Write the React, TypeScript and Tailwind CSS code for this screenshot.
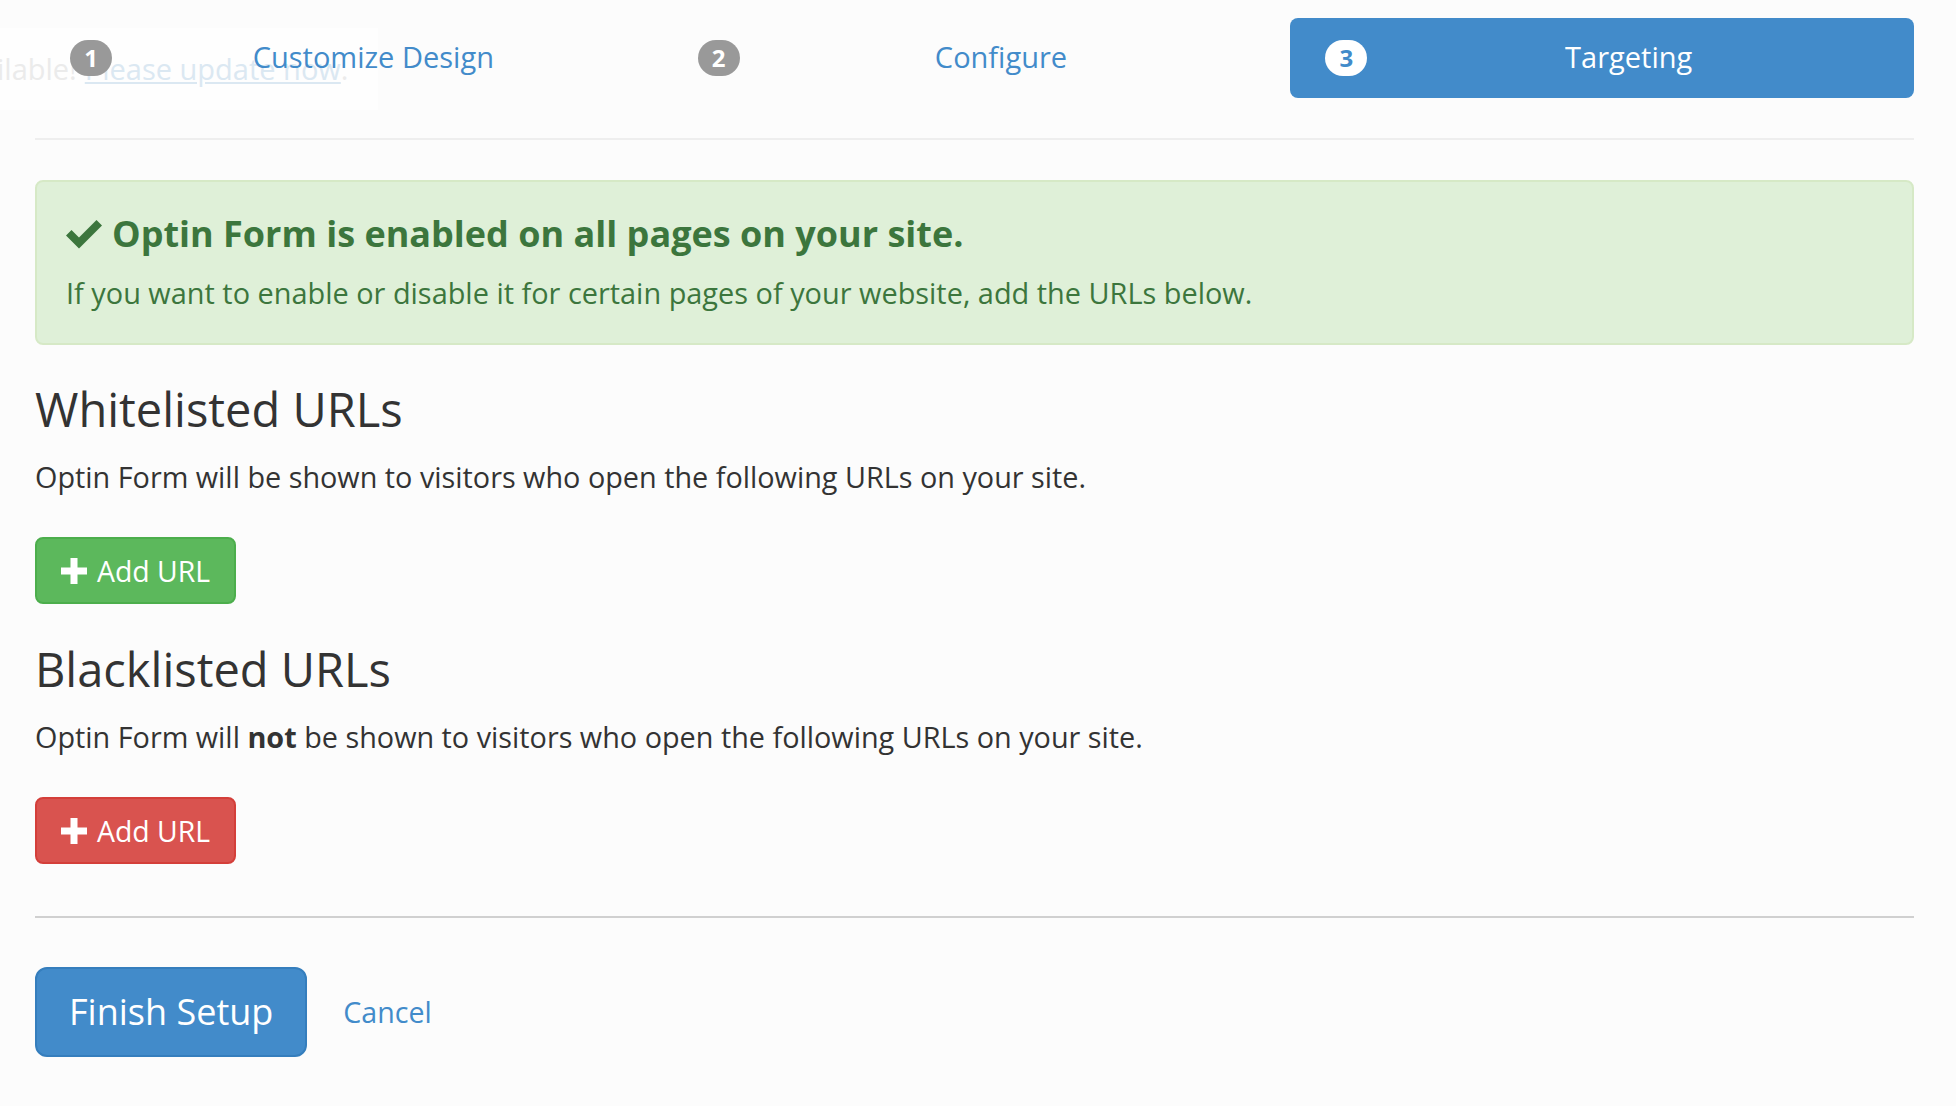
import React from 'react'

const font = { fontFamily: '"Open Sans", "Noto Sans", "Liberation Sans", sans-serif' }

const steps = [
  { num: 1, label: 'Customize Design', active: false },
  { num: 2, label: 'Configure', active: false },
  { num: 3, label: 'Targeting', active: true },
]

function CheckIcon() {
  return (
    <svg width="36" height="30" viewBox="0 0 36 30" className="shrink-0">
      <path d="M0 16.5 L5.5 11 L13 18.5 L30.5 1 L36 6.5 L13 29.5 Z" fill="#3c763d" />
    </svg>
  )
}

function PlusIcon() {
  return (
    <svg width="26" height="26" viewBox="0 0 26 26" className="shrink-0">
      <path d="M9.5 0 H16.5 V9.5 H26 V16.5 H16.5 V26 H9.5 V16.5 H0 V9.5 H9.5 Z" fill="#ffffff" />
    </svg>
  )
}

function AddUrlButton({ tone }: { tone: 'green' | 'red' }) {
  const cls =
    tone === 'green'
      ? 'bg-[#5cb85c] border-[#4cae4c]'
      : 'bg-[#d9534f] border-[#d43f3a]'
  return (
    <button
      className={`${cls} mt-[40px] flex h-[67px] items-center gap-[10px] rounded-[8px] border-2 px-[24px] text-[28.4px] leading-[40px] text-white`}
    >
      <PlusIcon />
      <span>Add URL</span>
    </button>
  )
}

export default function App() {
  return (
    <div className="relative min-h-screen overflow-hidden bg-[#fcfcfc] text-[#333333]" style={font}>
      {/* update notice peeking out behind the wizard */}
      <div className="absolute left-0 top-[28px] flex h-[82px] w-[378px] items-center overflow-hidden whitespace-nowrap bg-[#fefefe] text-[29px] leading-[40px] text-[#ebebeb]">
        <span className="-ml-[3px]">ilable! </span>
        <span className="ml-[8px] text-[#dbe8f2] underline decoration-[#dbe8f2]">Please update now</span>
        <span>.</span>
      </div>

      <div className="relative pl-[35px] pr-[42px] pt-[18px]">
        {/* Steps */}
        <div className="grid h-[80px] grid-cols-3 gap-[4px]">
          {steps.map((step) => (
            <div
              key={step.num}
              className={`flex items-center rounded-[8px] pl-[35px] pr-[24px] ${step.active ? 'bg-[#428bca]' : ''}`}
            >
              <span
                className={`flex h-[36px] w-[42px] shrink-0 items-center justify-center rounded-full text-[24px] font-bold leading-none ${
                  step.active ? 'bg-white text-[#428bca]' : 'bg-[#999999] text-white'
                }`}
              >
                {step.num}
              </span>
              <span
                className={`-mt-[2px] flex-1 text-center text-[29px] leading-[40px] ${step.active ? 'text-white' : 'text-[#428bca]'}`}
              >
                {step.label}
              </span>
            </div>
          ))}
        </div>

        <div className="mt-[40px] h-[2px] bg-[#eeeeee]" />

        {/* Alert */}
        <div className="mt-[40px] rounded-[8px] border-2 border-[#d6e9c6] bg-[#dff0d8] px-[29px] pb-[30px] pt-[32px] text-[#3c763d]">
          <div className="flex items-center gap-[10px] text-[36px] font-bold leading-[40px]">
            <CheckIcon />
            <span>Optin Form is enabled on all pages on your site.</span>
          </div>
          <p className="mt-[19px] text-[28.9px] leading-[40px]">
            If you want to enable or disable it for certain pages of your website, add the URLs below.
          </p>
        </div>

        {/* Whitelist */}
        <h3 className="mt-[38px] text-[47px] font-normal leading-[53px]">Whitelisted URLs</h3>
        <p className="mt-[21px] text-[28.8px] leading-[40px]">
          Optin Form will be shown to visitors who open the following URLs on your site.
        </p>
        <AddUrlButton tone="green" />

        {/* Blacklist */}
        <h3 className="mt-[39px] text-[47px] font-normal leading-[53px]">Blacklisted URLs</h3>
        <p className="mt-[21px] text-[28.8px] leading-[40px]">
          Optin Form will <b className="font-bold">not</b> be shown to visitors who open the following URLs on your site.
        </p>
        <AddUrlButton tone="red" />

        <div className="mt-[52px] h-[2px] bg-[#d0d0d0]" />

        {/* Footer actions */}
        <div className="mt-[49px] flex items-center">
          <button className="flex h-[90px] items-center rounded-[12px] border-2 border-[#357ebd] bg-[#428bca] px-[32px] text-[36px] leading-[48px] text-white">
            Finish Setup
          </button>
          <a className="ml-[36px] text-[28.6px] leading-[40px] text-[#428bca]">Cancel</a>
        </div>
      </div>
    </div>
  )
}
